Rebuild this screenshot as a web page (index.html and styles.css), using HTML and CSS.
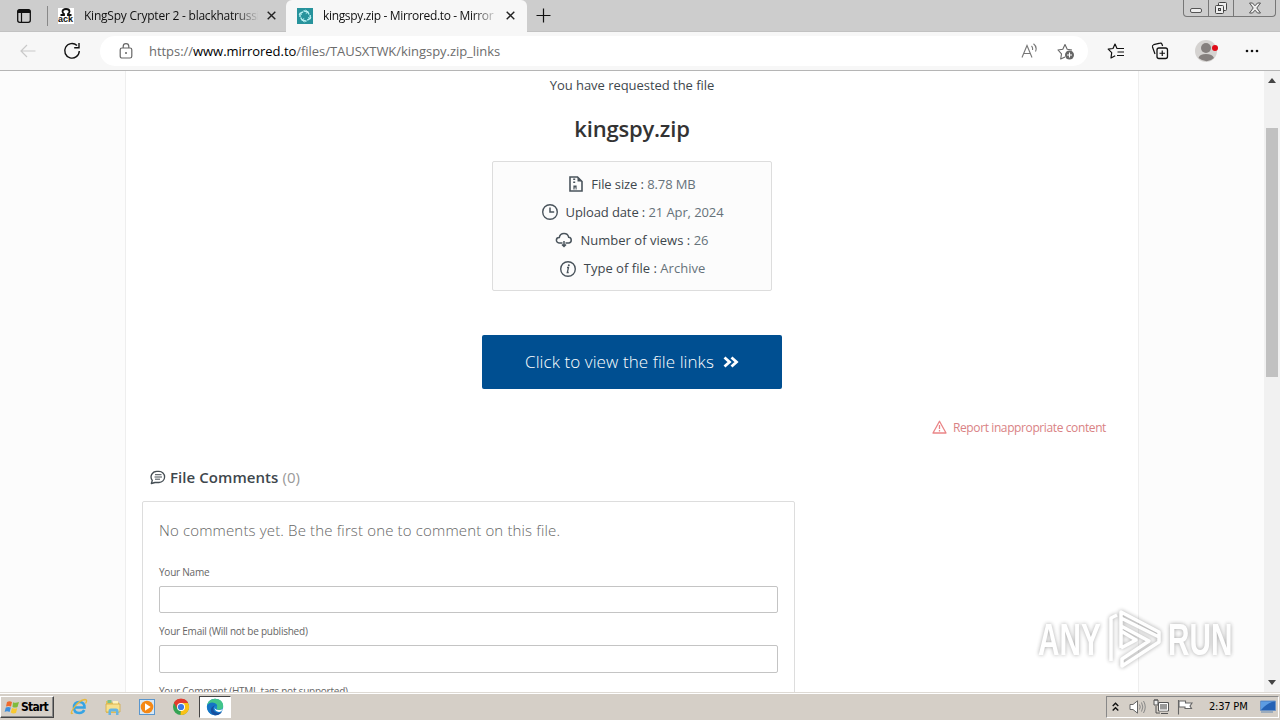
FILE: index.html
```html
<!DOCTYPE html>
<html lang="en">
<head>
    <meta charset="UTF-8">
    <title>kingspy.zip - Mirrored.to</title>
    <link rel="stylesheet" href="styles.css">
</head>
<body>
<div class="tabs">
    <svg class="tab-menu" width="16" height="16" viewBox="0 0 16 16"><rect x="1.7" y="1.7" width="12.6" height="12.6" rx="2" fill="none" stroke="#111" stroke-width="1.3"/><path d="M1.5 3.5a2 2 0 0 1 2-2h9a2 2 0 0 1 2 2V5h-13z" fill="#111"/><path d="M5.5 5v9" stroke="#111" stroke-width="1.2"/></svg>
    <span class="divider"></span>
    <div class="tab first">
        <span class="fav"><svg width="16" height="8" viewBox="0 0 16 8"><path d="M2.5 7H6V6Q4.500 5 4.500 3.500Q4.500 1 8 1t3.500 2.500Q11.500 5 10 6v1h3.500" fill="none" stroke="#111" stroke-width="1.800"/></svg><b>ack</b></span>
        <span class="tab-title">KingSpy Crypter 2 - blackhatrussi</span>
        <svg class="x" width="9" height="9" viewBox="0 0 9 9"><path d="M.7.7l7.600 7.600M8.300.7L.7 8.300" stroke="#222" stroke-width="1.400"/></svg>
    </div>
    <div class="tab active">
        <svg class="fav2" width="16" height="16" viewBox="0 0 16 16"><rect width="16" height="16" fill="#27939c"/><g fill="none" stroke="#b9f0f2" stroke-width="1.400"><path d="M3 9V5.500l3-1.700M6.500 2.800L11 4l1 2.500M13.200 7v3.500l-3 1.700M9.500 13.200L5 12l-1.300-2.500"/><path d="M2 7l1.200-1.700L5 6.500M8.500 2L11 4 8.800 5.500M14 9l-1 1.700L11 9.500M7.500 14L5 12l2.200-1.500" stroke-width="1"/></g></svg>
        <span class="tab-title">kingspy.zip - Mirrored.to - Mirror</span>
        <svg class="x" width="9" height="9" viewBox="0 0 9 9"><path d="M.7.7l7.600 7.600M8.300.7L.7 8.300" stroke="#222" stroke-width="1.400"/></svg>
    </div>
    <svg class="plus" width="15" height="15" viewBox="0 0 15 15"><path d="M7.500 .5v14M.5 7.500h14" stroke="#111" stroke-width="1.200"/></svg>
    <div class="winbtns">
        <span class="wb"><svg width="14" height="16" viewBox="0 0 14 16"><rect x="1.500" y="8.500" width="11" height="4" rx="1.500" fill="#eee" stroke="#555"/></svg></span>
        <span class="wb"><svg width="14" height="16" viewBox="0 0 14 16"><rect x="4.500" y="2.500" width="8" height="8" rx="1" fill="#eee" stroke="#444"/><rect x="1.500" y="5.500" width="8" height="8" rx="1" fill="#eee" stroke="#444"/><rect x="4.500" y="8.500" width="2" height="2" fill="#ccc" stroke="#444"/></svg></span>
        <span class="wb last"><svg width="14" height="16" viewBox="0 0 14 16"><path d="M1.500 3h3L7 5.800 9.500 3h3L8.800 8l3.700 5h-3L7 10.200 4.500 13h-3l3.700-5z" fill="#eee" stroke="#555"/></svg></span>
    </div>
</div>

<div class="toolbar">
    <svg class="back" width="16" height="14" viewBox="0 0 16 14"><path d="M15.500 7H1M7 1L1 7l6 6" fill="none" stroke="#c9c9c9" stroke-width="1.200"/></svg>
    <svg class="reload" width="18" height="18" viewBox="0 0 18 18"><path d="M14 3.500A7.300 7.300 0 1 0 16.300 9M16 1v4.800h-4.800" fill="none" stroke="#111" stroke-width="1.400"/></svg>
    <div class="address">
        <svg class="lock" width="14" height="16" viewBox="0 0 14 16"><rect x="1.200" y="5" width="11.600" height="10" rx="1.800" fill="none" stroke="#666" stroke-width="1.200"/><path d="M4.200 5V3.500a2.800 2.800 0 0 1 5.600 0V5" fill="none" stroke="#666" stroke-width="1.200"/><circle cx="7" cy="10" r="1" fill="#666"/></svg>
        <span class="url">https://<b>www.mirrored.to</b>/files/TAUSXTWK/kingspy.zip_links</span>
        <svg class="read" width="17" height="16" viewBox="0 0 17 16"><path d="M1 14.500L6 2.500l5 12M2.800 10.500h6.500M10.500 3q1.500 1.500 1 4M12.500 .8Q16.500 4 14.500 8.500" fill="none" stroke="#777" stroke-width="1.100"/></svg>
        <svg class="addfav" width="18" height="18" viewBox="0 0 18 18"><path d="M8 15l-4.300 2 .8-5.200L1 8l4.800-.7L8 2.500l2.200 4.800L15 8" fill="none" stroke="#666" stroke-width="1.100" stroke-linejoin="round"/><circle cx="12.500" cy="13" r="4.500" fill="#666"/><path d="M12.500 10.500v5M10 13h5" stroke="#fff" stroke-width="1.100"/></svg>
    </div>
    <svg class="favs" width="18" height="16" viewBox="0 0 18 16"><path d="M10.800 5.500H10L8 1 6 5.500l-4.800.7 3.500 3.500L4 15l4.200-2.300M10.500 5.500H17M10.500 9H17M10 12.500h7" fill="none" stroke="#111" stroke-width="1.200" stroke-linejoin="round"/></svg>
    <svg class="coll" width="18" height="18" viewBox="0 0 18 18"><rect x="6" y="6" width="10.500" height="10.500" rx="2" fill="none" stroke="#111" stroke-width="1.300"/><path d="M11.250 8.500v5.500M8.500 11.250H14M4 12L1.500 5Q1 3.300 2.700 2.700L9 1.200q1.500-.4 2 1L11.600 4" fill="none" stroke="#111" stroke-width="1.200"/></svg>
    <svg class="avatar" width="24" height="24" viewBox="0 0 24 24"><circle cx="12" cy="12" r="11" fill="#d5d3d1"/><circle cx="12" cy="9" r="5" fill="#85807e"/><path d="M4.500 19q1-4 7.500-4t8 4q-7 6.500-15.500 0z" fill="#85807e"/><circle cx="21" cy="9" r="3" fill="#e00b18"/></svg>
    <svg class="dots" width="14" height="4" viewBox="0 0 14 4"><g fill="#111"><circle cx="2" cy="2" r="1.300"/><circle cx="7" cy="2" r="1.300"/><circle cx="12" cy="2" r="1.300"/></g></svg>
</div>

<div class="view">
    <div class="page">
        <div class="request">You have requested the file</div>
        <h1>kingspy.zip</h1>
        <ul class="info">
            <li>
                <svg width="16" height="18" viewBox="0 0 16 18"><path d="M2 2h7.500L14 6.500V16H2z" fill="none" stroke="#4a545c" stroke-width="1.600"/><path d="M9.500 2v4.500H14z" fill="#4a545c"/><path d="M5.200 3.500h2v1.500h-2zM5.200 6.500h2V8h-2zM5.400 10.500h3.200v4H7.600v-2h-1v2H5.400z" fill="#4a545c"/></svg>
                <span class="size">File size : <em>8.78 MB</em></span>
            </li>
            <li>
                <svg width="18" height="18" viewBox="0 0 18 18"><circle cx="9" cy="9" r="7.300" fill="none" stroke="#4a545c" stroke-width="1.400"/><path d="M9 4.500V9h4.200" fill="none" stroke="#4a545c" stroke-width="1.500"/></svg>
                <span class="date">Upload date : <em>21 Apr, 2024</em></span>
            </li>
            <li>
                <svg width="18" height="18" viewBox="0 0 18 18"><path d="M7.500 12H4a2.700 2.700 0 0 1 .3-5.500A4.800 4.800 0 0 1 13.700 6.300a2.900 2.900 0 0 1 .3 5.700h-3.500M9 10v5M7 13.500L9 15.500l2-2" fill="none" stroke="#4a545c" stroke-width="1.500"/></svg>
                <span class="views">Number of views : <em>26</em></span>
            </li>
            <li>
                <svg width="18" height="18" viewBox="0 0 18 18"><circle cx="9" cy="10" r="7.300" fill="none" stroke="#4a545c" stroke-width="1.400"/><path d="M8 8.500h1.500L8.300 13.500h1.400" fill="none" stroke="#4a545c" stroke-width="1.300"/><circle cx="9.800" cy="6.300" r="1" fill="#4a545c"/></svg>
                <span class="type">Type of file : <em>Archive</em></span>
            </li>
        </ul>
        <a class="btn"><span>Click to view the file links</span><svg width="16" height="12" viewBox="0 0 16 12"><path d="M1.500 1.500L6.500 6l-5 4.500M8.500 1.500l5 4.500-5 4.500" fill="none" stroke="#fff" stroke-width="2.800"/></svg></a>
        <div class="report"><svg width="15" height="14" viewBox="0 0 15 14"><path d="M7.500 1.200L14 13H1z" fill="none" stroke="#ea8587" stroke-width="1.300" stroke-linejoin="round"/><path d="M7.500 5v4M7.500 10v1.500" stroke="#ea8587" stroke-width="1.300"/></svg><span>Report inappropriate content</span></div>
        <h2><svg width="16" height="15" viewBox="0 0 16 15"><path d="M1.300 13.500L2.300 10.500A5.700 5.700 0 0 1 7 1.300h2a5.500 5.500 0 0 1 0 11.200H5z" fill="none" stroke="#454e54" stroke-width="1.300" stroke-linejoin="round"/><path d="M5 4.700h6.500M4.500 7h7.500M5 9.200h5" stroke="#454e54" stroke-width="1"/></svg><span>File Comments <em>(0)</em></span></h2>
        <div class="comments">
            <p>No comments yet. Be the first one to comment on this file.</p>
            <label class="l1">Your Name</label>
            <div class="field"></div>
            <label class="l2">Your Email (Will not be published)</label>
            <div class="field tall"></div>
            <label class="l3">Your Comment (HTML tags not supported)</label>
        </div>
    </div>
    <div class="scroll">
        <svg width="8" height="5" viewBox="0 0 8 5"><path d="M0 5l4-5 4 5z" fill="#444"/></svg>
        <span class="thumb"></span>
        <svg class="down" width="8" height="5" viewBox="0 0 8 5"><path d="M0 0l4 5 4-5z" fill="#444"/></svg>
    </div>
</div>

<div class="taskbar">
    <div class="start"><svg width="16" height="16" viewBox="0 0 16 16"><path d="M3 3q2.500-1.500 5 0L7 7.500q-2.500-1.200-5 0z" fill="#ef6a2c"/><path d="M9 3.300q2.500 1.200 6-.3L13.500 8q-2.500 1-5 0z" fill="#7fbb3c"/><path d="M1.800 8.500q2.500-1.200 5 0L5.600 13Q3 11.500.6 13z" fill="#3d8fdd"/><path d="M8 9q2.500 1.200 5.200.2L12 14q-3 1-5.200-.5z" fill="#f9c930"/></svg><span>Start</span></div>
    <div class="task"><svg width="18" height="18" viewBox="0 0 18 18"><path d="M3.500 9.500h11Q14.500 4 9.300 4 4 4 4 9.500 4 15 9.300 15q3.500 0 4.900-3" fill="none" stroke="#36a4e4" stroke-width="2.600"/><path d="M3 15Q-.5 17 3 11 9 2 15 1.500q3 0 .5 4" fill="none" stroke="#e8b93c" stroke-width="1.300"/></svg></div>
    <div class="task"><svg width="18" height="18" viewBox="0 0 18 18"><path d="M2 3h5l1 1.500h7V15H2z" fill="#e6c45c"/><path d="M3.500 2h4v3h-4z" fill="#7cc08a"/><path d="M9 3h5v3H9z" fill="#fff3bd"/><path d="M2 6h14v8H2z" fill="#f7e08c" stroke="#d2ab45" stroke-width=".8"/><path d="M4.500 17v-4q0-2.500 2.500-2.500h5q2.500 0 2.500 2.500v4H12v-3.500H7V17z" fill="#65b5e4"/></svg></div>
    <div class="task"><svg width="18" height="18" viewBox="0 0 18 18"><rect x="1.500" y="1.500" width="15" height="15" fill="#d7e8f6" stroke="#5a96cd"/><circle cx="9" cy="9" r="6.300" fill="#f58815"/><path d="M7 5.300v7.400L12.700 9z" fill="#fff"/></svg></div>
    <div class="task"><svg width="18" height="18" viewBox="0 0 18 18"><circle cx="9" cy="9" r="8" fill="#34a353"/><path d="M9 9L2 5A8 8 0 0 1 16 5z" fill="#e33b2e"/><path d="M9 9V5h7A8 8 0 0 1 8.500 17z" fill="#fbc116"/><path d="M9 5h7A8 8 0 0 0 2 5l3.500 6z" fill="#e33b2e"/><circle cx="9" cy="9" r="4" fill="#fff"/><circle cx="9" cy="9" r="3.100" fill="#3c79e6"/></svg></div>
    <div class="task open"><svg width="18" height="18" viewBox="0 0 18 18"><circle cx="9" cy="9" r="8.200" fill="#1684cf"/><path d="M1 7Q3 .8 9 .8q7.500 0 8.200 7 0 4-4.200 4-3 0-2-2.300Q12 6 8 5.500 4 5 1 7z" fill="#42c58a"/><path d="M1 8q2-4 6.500-3.300Q11 5.500 11 8 8 7 7.500 10q0 4.500 7.500 4.500-3 3.500-7.500 2.500Q1 15.500 1 8z" fill="#1574c5"/><path d="M7.500 9q-1.500 5 4.500 6 2 .2 4-1.500-2 4-7 3.700Q4 16 5 11q.5-2.500 4-3.500z" fill="#174f9e"/><path d="M9 7.500q-1.500 4.500 4 4.500 2.500 0 4-1.500-1.500 4-5 3.300-4.500-1-3-6.300z" fill="#fff"/></svg></div>
    <div class="tray">
        <svg class="chev" width="7" height="10" viewBox="0 0 7 10"><path d="M.7 4L3.500 1.200 6.300 4M.7 8.500l2.800-2.800 2.800 2.800" fill="none" stroke="#111" stroke-width="1.400"/></svg>
        <svg class="snd" width="17" height="14" viewBox="0 0 17 14"><path d="M1 4.500h3L8.500.8v12.400L4 9.500H1z" fill="#fff" stroke="#666"/><path d="M10.500 4.500q1.500 2.500 0 5M12.500 2.500q2.700 4.500 0 9M14.500 1q3.500 6 0 12" fill="none" stroke="#888"/></svg>
        <svg class="net" width="17" height="16" viewBox="0 0 17 16"><rect x="5.500" y="3.500" width="10" height="8" fill="#999" stroke="#fff"/><path d="M5.500 12V3.500h10V12zM8 14.500h7M3 7v7h4" fill="none" stroke="#555"/><path d="M6.500 4.500h8v6.500h-8z" fill="none" stroke="#fff"/><path d="M1 1h4v5H1zM2 0v2M4 0v2" fill="#eee" stroke="#555"/></svg>
        <svg class="flag" width="17" height="16" viewBox="0 0 17 16"><path d="M1.500 1v14.500M2 2h6.500v2H15l-2 3 1.500 2.500H8V8H2z" fill="#fff" stroke="#666" stroke-width="1.100"/></svg>
        <span class="clock">2:37 PM</span>
        <svg class="desk" width="16" height="14" viewBox="0 0 16 14"><path d="M.5 1h15v9.500H.5z" fill="#2562b5" stroke="#6d93c4"/><path d="M1 10V1.500h13Q7 3 1 10z" fill="#5d9ce2"/><path d="M1 12h12" stroke="#8aa0b8" stroke-width="1.500"/></svg>
    </div>
</div>

<div class="watermark">
    <span class="any">ANY</span>
    <svg width="60" height="66" viewBox="0 0 60 66"><path d="M7 54V11l6-3M17 41V5l38 20v5L17 11M17 19l28 15-27 18v7l37-24v-5M17 41l15-8-15-9" fill="none" stroke="#fff" stroke-width="3.500" stroke-linejoin="round"/></svg>
    <span class="run">RUN</span>
</div>
</body>
</html>
```

FILE: styles.css
```css
*{
    box-sizing: border-box;
    margin: 0;
    padding: 0;
}
body{
    width: 1280px;
    height: 720px;
    overflow: hidden;
    display: flex;
    flex-direction: column;
    font-family: "Open Sans", "Noto Sans", sans-serif;
    font-size: 13px;
    background: #fff;
}
svg{
    display: block;
    flex: none;
}
em{
    font-style: normal;
}
span, label, p, h1{
    white-space: nowrap;
}

/* tab strip */
.tabs{
    height: 32px;
    flex: none;
    display: flex;
    align-items: center;
    background: #cdcdcd;
    border-bottom: 1px solid #c2c2c2;
}
.tab-menu{
    margin-left: 16px;
}
.divider{
    width: 1px;
    height: 20px;
    margin-left: 15px;
    background: #888;
}
.tab{
    height: 32px;
    display: flex;
    align-items: center;
    font-size: 12px;
    letter-spacing: -.23px;
    color: #111;
}
.first{
    width: 238px;
    padding-left: 10px;
}
.tab.active{
    width: 241px;
    padding-left: 11px;
    background: #f7f7f7;
    border-radius: 6px 6px 0 0;
}
.active .tab-title{
    letter-spacing: -.34px;
}
.fav{
    width: 16px;
    height: 16px;
    background: #fff;
    overflow: hidden;
}
.fav b{
    display: block;
    font: bold 9px/7px "Liberation Sans", Arial, sans-serif;
    letter-spacing: 0;
}
.tab-title{
    width: 174px;
    margin: 0 9px 0 10px;
    -webkit-mask-image: linear-gradient(90deg, #000 150px, transparent 176px);
    mask-image: linear-gradient(90deg, #000 150px, transparent 176px);
}
.plus{
    margin-left: 9px;
}
.winbtns{
    display: flex;
    align-self: flex-start;
    height: 17px;
    margin: 0 4px 0 auto;
    border: 1px solid #777;
    border-top: 0;
    border-radius: 0 0 4px 4px;
}
.wb{
    width: 25px;
    display: flex;
    justify-content: center;
    border-right: 1px solid #777;
}
.wb.last{
    width: 41px;
    border-right: 0;
}

/* toolbar */
.toolbar{
    height: 39px;
    flex: none;
    display: flex;
    align-items: center;
    background: #f7f7f7;
    border-bottom: 1px solid #b5b5b5;
}
.back{
    margin-left: 20px;
}
.reload{
    margin-left: 27px;
}
.address{
    width: 988px;
    height: 30px;
    margin-left: 19px;
    padding-left: 19px;
    display: flex;
    align-items: center;
    background: #fff;
    border-radius: 15px;
}
.url{
    flex: none;
    margin-left: 16px;
    font-size: 13px;
    letter-spacing: -.04px;
    color: #6c6c6c;
}
.url b{
    font-weight: normal;
    color: #000;
}
.read{
    margin-left: auto;
}
.addfav{
    margin: 0 13px 0 19px;
}
.favs{
    margin-left: 19px;
}
.coll{
    margin-left: 26px;
}
.avatar{
    margin-left: 25px;
}
.dots{
    margin-left: 27px;
}

/* page */
.view{
    flex: 1;
    min-height: 0;
    display: flex;
    background: #fcfcfc;
    overflow: hidden;
}
.page{
    width: 1014px;
    height: 760px;
    margin-left: 125px;
    flex: none;
    background: #fff;
    border-left: 1px solid #eee;
    border-right: 1px solid #eee;
    color: #3e474d;
}
.request{
    height: 29px;
    line-height: 29px;
    letter-spacing: -.04px;
    text-align: center;
}
h1{
    height: 58px;
    line-height: 56px;
    font-size: 22px;
    font-weight: 600;
    letter-spacing: -.2px;
    text-align: center;
    color: #333;
}
.info{
    width: 280px;
    height: 130px;
    margin: 3px auto 0;
    padding-top: 8px;
    background: #fcfcfc;
    border: 1px solid #ddd;
    border-radius: 2px;
    list-style: none;
}
.info li{
    height: 28px;
    display: flex;
    align-items: center;
    justify-content: center;
    gap: 7px;
}
.info em{
    color: #66727a;
}
.size{
    letter-spacing: -.1px;
}
.date{
    letter-spacing: -.1px;
}
.type, .views{
    letter-spacing: .02px;
}
.btn{
    width: 300px;
    height: 54px;
    margin: 44px auto 0;
    padding-bottom: 1px;
    display: flex;
    align-items: center;
    justify-content: center;
    gap: 9px;
    background: #004f91;
    border-radius: 2px;
    font-size: 17px;
    font-weight: 300;
    letter-spacing: .08px;
    color: #fff;
}
.report{
    height: 20px;
    margin: 28px 32px 0 0;
    display: flex;
    align-items: center;
    justify-content: flex-end;
    gap: 6px;
    font-size: 12px;
    letter-spacing: -.39px;
    color: #d98284;
}
h2{
    height: 24px;
    margin: 28px 0 0 24px;
    display: flex;
    align-items: center;
    gap: 4px;
    font-size: 15px;
    font-weight: 600;
    letter-spacing: .07px;
    color: #3e474d;
}
h2 em{
    font-weight: 400;
    color: #999;
}
.comments{
    width: 653px;
    height: 260px;
    margin: 12px 0 0 16px;
    padding: 16px;
    display: flex;
    flex-direction: column;
    border: 1px solid #ddd;
    border-radius: 2px;
    color: #666;
}
.comments p{
    height: 26px;
    line-height: 24px;
    font-size: 15px;
    font-weight: 300;
    letter-spacing: .15px;
}
.comments label{
    height: 14px;
    line-height: 13px;
    font-size: 10px;
    letter-spacing: -.23px;
}
.l1{
    margin-top: 22px;
}
.l2{
    margin-top: 12px;
}
.l3{
    margin-top: 12px;
}
.field{
    height: 27px;
    margin-top: 6px;
    border: 1px solid #c4c4c4;
    border-radius: 2px;
}
.field.tall{
    height: 28px;
}
.scroll{
    width: 16px;
    margin-left: auto;
    padding: 7px 0;
    display: flex;
    flex-direction: column;
    align-items: center;
    background: #f1f1f1;
}
.thumb{
    width: 12px;
    height: 249px;
    margin-top: 45px;
    background: #c1c1c1;
}
.down{
    margin-top: auto;
}

/* taskbar */
.taskbar{
    height: 28px;
    flex: none;
    display: flex;
    align-items: center;
    padding: 2px 1px 2px 0;
    background: #d5cfc7;
    border-top: 1px solid #dedad4;
    box-shadow: inset 0 1px #fff;
}
.start{
    width: 54px;
    height: 22px;
    margin-right: 9px;
    padding-left: 3px;
    display: flex;
    align-items: center;
    gap: 1px;
    border: 1px solid #fff;
    border-right-color: #444;
    border-bottom-color: #444;
    box-shadow: inset -1px -1px #888;
    font: bold 12px "DejaVu Sans Condensed", "DejaVu Sans", sans-serif;
    letter-spacing: -.75px;
    color: #000;
}
.task{
    width: 32px;
    height: 22px;
    margin-right: 2px;
    display: flex;
    align-items: center;
    justify-content: center;
}
.task.open{
    background: #fff;
    border: 1px solid #444;
    border-right-color: #fff;
    border-bottom-color: #fff;
}
.tray{
    width: 173px;
    height: 22px;
    margin-left: auto;
    padding-left: 5px;
    display: flex;
    align-items: center;
    border: 1px solid #888;
    border-right-color: #fff;
    border-bottom-color: #fff;
}
.snd{
    margin-left: 10px;
}
.net{
    margin-left: 7px;
}
.flag{
    margin-left: 7px;
}
.clock{
    width: 41px;
    margin-left: 15px;
    font: 11px "DejaVu Sans Condensed", "DejaVu Sans", sans-serif;
    letter-spacing: -.2px;
    color: #000;
}
.desk{
    margin-left: 10px;
}

.watermark{
    position: absolute;
    left: 1038px;
    top: 607px;
    height: 66px;
    display: flex;
    align-items: center;
    color: #fff;
    font: bold 45px/66px "Liberation Sans", Arial, sans-serif;
    filter: drop-shadow(0 0 2px rgba(0, 0, 0, .4));
    opacity: .85;
}
.watermark span{
    width: 66px;
    transform: scaleX(.66);
    transform-origin: left;
}
.watermark .run{
    margin-left: 4px;
}
```
